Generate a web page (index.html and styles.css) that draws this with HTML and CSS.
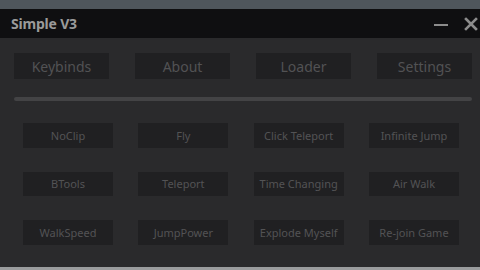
FILE: index.html
```html
<!DOCTYPE html>
<html lang="en">
<head>
  <meta charset="UTF-8">
  <title>Simple V3</title>
  <link rel="stylesheet" href="styles.css">
</head>
<body>

<div class="backdrop"></div>

<div class="window">
  <div class="titlebar">
    <span class="title">Simple V3</span>
    <div class="controls">
      <span class="minimize"></span>
      <svg class="close" width="14" height="14" viewBox="0 0 14 14">
        <path d="M2 2 L12 12 M12 2 L2 12" stroke="#8c8c8c" stroke-width="2.6" stroke-linecap="square"/>
      </svg>
    </div>
  </div>

  <div class="content">
    <div class="tabs">
      <button class="tab">Keybinds</button>
      <button class="tab">About</button>
      <button class="tab">Loader</button>
      <button class="tab">Settings</button>
    </div>

    <div class="divider"></div>

    <div class="actions">
      <button class="action">NoClip</button>
      <button class="action">Fly</button>
      <button class="action">Click Teleport</button>
      <button class="action">Infinite Jump</button>
      <button class="action">BTools</button>
      <button class="action">Teleport</button>
      <button class="action">Time Changing</button>
      <button class="action">Air Walk</button>
      <button class="action">WalkSpeed</button>
      <button class="action">JumpPower</button>
      <button class="action">Explode Myself</button>
      <button class="action">Re-join Game</button>
    </div>
  </div>
</div>

<div class="taskbar"></div>

</body>
</html>
```

FILE: styles.css
```css
body {
  margin: 0;
  width: 480px;
  height: 270px;
  overflow: hidden;
  font-family: "Noto Sans", "DejaVu Sans", sans-serif;
  background-color: #2a2a2c;
  display: flex;
  flex-direction: column;
}
.backdrop {
  height: 9px;
  background-color: #4f565c;
}
.window {
  flex: 1;
  display: flex;
  flex-direction: column;
}
.titlebar {
  height: 29px;
  background-color: #0f0f11;
  display: flex;
  align-items: center;
  justify-content: space-between;
  padding: 0 2px 0 11px;
}
.title {
  color: #9a9a9a;
  font-weight: bold;
  font-size: 14px;
  letter-spacing: -0.2px;
}
.controls {
  display: flex;
  align-items: center;
  gap: 16px;
}
.minimize {
  display: block;
  width: 14px;
  height: 2px;
  background-color: #8c8c8c;
  margin-top: 3px;
}
.content {
  flex: 1;
  background-color: #2a2a2c;
  padding: 15px 8px 0 14px;
}
.tabs {
  display: flex;
  justify-content: space-between;
}
.tab {
  width: 95px;
  height: 26px;
  border: none;
  padding: 0;
  background-color: #202022;
  color: #525254;
  font-family: "Noto Sans", "DejaVu Sans", sans-serif;
  font-size: 14px;
}
.divider {
  height: 4px;
  margin: 18px 0 0 0;
  background-color: #434345;
  border-radius: 2px;
}
.actions {
  display: grid;
  grid-template-columns: repeat(4, 90px);
  justify-content: space-between;
  row-gap: 24px;
  margin: 22px 13px 0 9px;
}
.action {
  height: 24.5px;
  border: none;
  padding: 0;
  background-color: #202022;
  color: #535355;
  font-family: "Noto Sans", "DejaVu Sans", sans-serif;
  font-size: 11px;
}
.taskbar {
  height: 3px;
  background-color: #9a9c9e;
}
```
